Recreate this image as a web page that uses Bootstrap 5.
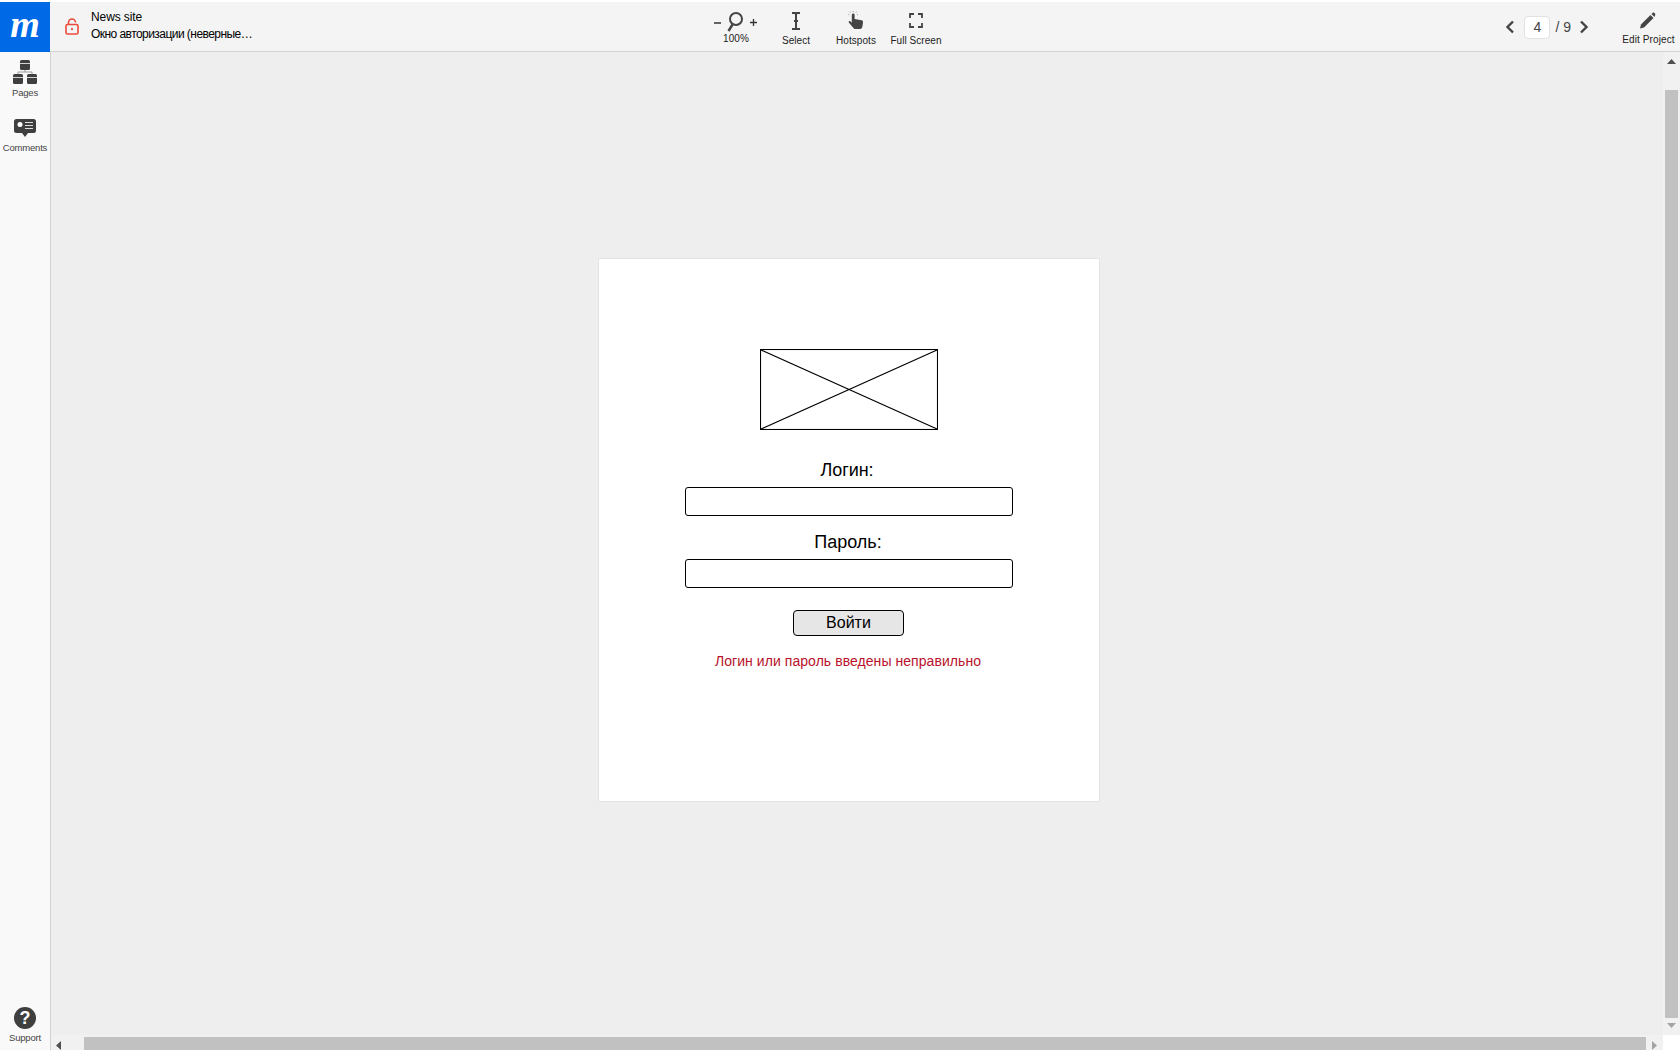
<!DOCTYPE html>
<html lang="en">

<head>
    <meta charset="UTF-8">
    <meta name="viewport" content="width=device-width, initial-scale=1.0">
    <title>News site</title>
    <link href="https://cdn.jsdelivr.net/npm/bootstrap@5.3.0/dist/css/bootstrap.min.css" rel="stylesheet">
    <style>
        html, body { height: 100%; overflow: hidden; }
        body { font-family: "Liberation Sans", Arial, sans-serif; background: #fff; color: #000; padding-top: 2px; }
        .app { height: 1048px; }
        .topbar { height: 50px; background: #f4f4f4; border-bottom: 1px solid #d2d2d2; flex: none; }
        .logo-box { width: 50px; height: 50px; background: #0069e6; color: #fff; font: italic bold 38px/44px "Liberation Serif", serif; text-align: center; flex: none; }
        .left-group { width: 706px; flex: none; }
        .lock-ico { margin-left: 15px; margin-right: 12px; }
        .proj-text { font-size: 12px; line-height: 17px; letter-spacing: -0.1px; padding-bottom: 1px; }
        .proj-sub { letter-spacing: -0.55px; }
        .tool { width: 60px; height: 49px; font-size: 10px; color: #222; padding-top: 9px; }
        .tool svg { display: block; height: 20px; }
        .tool-label { line-height: 12px; margin-top: 4px; white-space: nowrap; letter-spacing: 0.05px; }
        .tool-zoom { padding-top: 10px; }
        .tool-zoom svg { margin-left: -3px; }
        .tool-zoom .tool-label { margin-top: 1px; }
        .pager { font-size: 14px; color: #444; margin-right: 26px; padding-top: 1px; }
        .page-input { width: 26px; height: 23px; background: #fff; border: 1px solid #e2e2e2; border-radius: 4px; text-align: center; font-size: 14px; line-height: 21px; margin: 0 5px 0 9px; }
        .page-total { margin-right: 8px; }
        .tool-edit { width: 65px; padding-top: 9px; }
        .tool-edit svg { margin-right: 2px; }
        .tool-edit .tool-label { margin-top: 3px; margin-left: 2px; letter-spacing: 0.1px; }
        .side { width: 51px; background: #f9f9f9; border-right: 1px solid #d2d2d2; flex: none; font-size: 9.5px; color: #444; }
        .side-item { line-height: 12px; letter-spacing: -0.2px; white-space: nowrap; }
        .side-pages { padding-top: 8px; }
        .side-comments { padding-top: 20px; }
        .side-comments svg { margin-bottom: 5px; }
        .side-pages svg { margin-bottom: 3px; }
        .help-dot { width: 22px; height: 22px; border-radius: 50%; background: #3f3f3f; color: #fff; font-size: 18px; font-weight: bold; line-height: 22px; text-align: center; margin-bottom: 3px; }
        .side-support { padding-bottom: 6px; }
        .canvas { background: #eee; min-height: 0; overflow: hidden; }
        .screen-card { width: 502px; height: 544px; margin: 206px 0 0 547px; border: 1px solid #e3e3e3; border-radius: 2px; padding-top: 90px; background: #fff; flex: none; }
        .img-ph { display: block; width: 178px; height: 81px; }
        .fld-label { font-size: 18px; line-height: 21px; margin: 0; }
        .fld-login { margin-top: 30px; margin-bottom: 6px; margin-right: 4px; letter-spacing: -0.1px; }
        .fld-pass { margin-top: 16px; margin-bottom: 6px; margin-right: 2px; }
        .fld-input { width: 328px; height: 29px; border: 1px solid #000; border-radius: 3px; padding: 0 4px; background: #fff; }
        .enter-btn { width: 111px; height: 26px; margin: 22px 1px 0 0; padding: 0; border: 1px solid #000; border-radius: 4px; background: #e6e6e6; color: #000; font-size: 16px; line-height: 22px; }
        .err-msg { color: #b8122a; font-size: 14px; line-height: 16px; margin-top: 17px; margin-right: 2px; letter-spacing: 0.06px; }
        .vscroll { width: 17px; background: #f1f1f1; flex: none; }
        .vthumb { width: 13px; height: 928px; background: #c1c1c1; margin: 0 auto; }
        .arr-up { height: 38px; padding-top: 7px; }
        .arr-down { padding-top: 5px; }
        .hscroll { height: 15px; flex: none; }
        .htrack { background: #f1f1f1; padding-top: 2px; }
        .hthumb { width: 1562px; height: 13px; background: #c1c1c1; margin: 0 17px 0 33px; }
        .corner { width: 17px; background: #fff; flex: none; }
        .h-arr { width: 33px; padding: 4px 0 0 5px; flex: none; margin-right: -33px; }
        .h-arr-r { margin: 0; padding: 4px 0 0 6px; width: 17px; margin-left: -17px; }
    </style>
</head>

<body>
    <div class="app d-flex flex-column">
        <div class="topbar d-flex">
            <div class="left-group d-flex align-items-center">
                <div class="logo-box">m</div>
                <svg class="lock-ico" width="14" height="17" viewBox="0 0 14 17" fill="none" stroke="#ea4a3a" stroke-width="1.6">
                    <path d="M3.500 7V4.500a3.500 3.500 0 0 1 7 0"/>
                    <rect x="1" y="6.500" width="12" height="9.500" rx="1.500"/>
                    <circle cx="7" cy="11.200" r="1.100" fill="#ea4a3a" stroke="none"/>
                </svg>
                <div class="proj-text">
                    <div>News site</div>
                    <div class="proj-sub">Окно авторизации (неверные…</div>
                </div>
            </div>

            <div class="tool tool-zoom d-flex flex-column align-items-center">
                <svg width="44" height="20" viewBox="0 0 44 20">
                    <path d="M1 11h7M37 10.500h7M40.500 7v7" stroke="#333" stroke-width="1.300" fill="none"/>
                    <circle cx="23" cy="7" r="6" stroke="#444" stroke-width="2" fill="none"/>
                    <path d="M19.500 12.500 15.500 19" stroke="#444" stroke-width="2.400" fill="none"/>
                </svg>
                <div class="tool-label">100%</div>
            </div>
            <div class="tool d-flex flex-column align-items-center">
                <svg width="12" height="20" viewBox="0 0 12 20">
                    <path d="M2 2h3l1 1 1-1h3M2 18h3l1-1 1 1h3M6 3v14M4 10h4" stroke="#444" stroke-width="2" fill="none"/>
                </svg>
                <div class="tool-label">Select</div>
            </div>
            <div class="tool d-flex flex-column align-items-center">
                <svg width="16" height="20" viewBox="0 0 16 20">
                    <path d="M3.800 4a1.400 1.400 0 0 1 2.800 0v4l7 1.300c1.200.3 1.500 1.200 1.400 2.200l-.6 4c-.2 1.500-1 2.500-2.500 2.500H7.500c-1 0-1.700-.5-2.300-1.300L.8 11.500c-.6-1 .6-2 1.500-1.200l1.500 1.500z" fill="#444"/>
                    <path d="M1.200 3.800.4 3.400M2.300 1.500 1.800.7M5.200.9V0M8 1.500l.5-.8M9.200 3.800l.8-.4" stroke="#8a8a8a" stroke-width="1" fill="none"/>
                </svg>
                <div class="tool-label">Hotspots</div>
            </div>
            <div class="tool d-flex flex-column align-items-center">
                <svg width="14" height="20" viewBox="0 0 14 20">
                    <path d="M1 7V3h4M9 3h4v4M13 12v4H9M5 16H1v-4" stroke="#444" stroke-width="1.800" fill="none"/>
                </svg>
                <div class="tool-label">Full Screen</div>
            </div>

            <div class="pager d-flex align-items-center ms-auto">
                <svg width="10" height="14" viewBox="0 0 10 14"><path d="M8 1.500 2.500 7 8 12.500" stroke="#444" stroke-width="2.400" fill="none"/></svg>
                <div class="page-input">4</div>
                <div class="page-total">/ 9</div>
                <svg width="10" height="14" viewBox="0 0 10 14"><path d="M2 1.500 7.500 7 2 12.500" stroke="#444" stroke-width="2.400" fill="none"/></svg>
            </div>
            <div class="tool tool-edit d-flex flex-column align-items-center">
                <svg width="18" height="20" viewBox="0 0 18 20">
                    <path d="M3 13.500 12.500 4l3 3L6 16.500l-4 1z" fill="#444"/>
                    <path d="M13.500 3l1.200-1.200c.4-.4 1-.4 1.400 0l1 1c.4.400.4 1 0 1.400L16.500 6z" fill="#444"/>
                </svg>
                <div class="tool-label">Edit Project</div>
            </div>
        </div>

        <div class="d-flex flex-grow-1" style="min-height:0">
            <div class="side d-flex flex-column align-items-center">
                <div class="side-item side-pages d-flex flex-column align-items-center">
                    <svg width="24" height="24" viewBox="0 0 24 24">
                        <rect x="7" y="0" width="10" height="10" rx="1.500" fill="#3f3f3f"/>
                        <rect x="0" y="14" width="10" height="10" rx="1.500" fill="#3f3f3f"/>
                        <rect x="14" y="14" width="10" height="10" rx="1.500" fill="#3f3f3f"/>
                        <path d="M7 3.500h10M0 17.500h10M14 17.500h10" stroke="#f9f9f9" stroke-width=".8"/>
                        <path d="M12 10v2M5 14v-2h14v2" stroke="#999" stroke-width="1" fill="none"/>
                    </svg>
                    Pages
                </div>
                <div class="side-item side-comments d-flex flex-column align-items-center">
                    <svg width="22" height="18" viewBox="0 0 22 18">
                        <path d="M2.500 0h17A2.500 2.500 0 0 1 22 2.500v9a2.500 2.500 0 0 1-2.500 2.500H14l-3 4-3-4H2.500A2.500 2.500 0 0 1 0 11.500v-9A2.500 2.500 0 0 1 2.500 0z" fill="#3f3f3f"/>
                        <circle cx="6" cy="5.500" r="2.500" fill="#fff"/>
                        <path d="M11 3.500h8M11 6.500h8M11 9.500h8" stroke="#ddd" stroke-width="1.100"/>
                    </svg>
                    Comments
                </div>
                <div class="side-item side-support d-flex flex-column align-items-center mt-auto">
                    <div class="help-dot">?</div>
                    Support
                </div>
            </div>

            <div class="d-flex flex-column flex-grow-1" style="min-width:0">
                <div class="d-flex flex-grow-1" style="min-height:0">
                    <div class="canvas flex-grow-1 d-flex align-items-start">
                        <div class="screen-card d-flex flex-column align-items-center">
                            <svg class="img-ph" viewBox="0 0 178 81" preserveAspectRatio="none">
                                <rect x=".5" y=".5" width="177" height="80" fill="#fff" stroke="#000" stroke-width="1.100"/>
                                <path d="M1 1 177 80M177 1 1 80" stroke="#000" stroke-width="1.200"/>
                            </svg>
                            <label class="fld-label fld-login" for="login">Логин:</label>
                            <input class="fld-input" id="login" type="text">
                            <label class="fld-label fld-pass" for="pass">Пароль:</label>
                            <input class="fld-input" id="pass" type="text">
                            <button class="btn enter-btn" type="button">Войти</button>
                            <div class="err-msg">Логин или пароль введены неправильно</div>
                        </div>
                    </div>
                    <div class="vscroll d-flex flex-column">
                        <div class="arr-up d-flex justify-content-center">
                            <svg width="9" height="5" viewBox="0 0 9 5"><path d="M4.500 0 9 5H0z" fill="#505050"/></svg>
                        </div>
                        <div class="vthumb"></div>
                        <div class="arr-down d-flex justify-content-center">
                            <svg width="9" height="5" viewBox="0 0 9 5"><path d="M0 0h9L4.500 5z" fill="#a3a3a3"/></svg>
                        </div>
                    </div>
                </div>
                <div class="hscroll d-flex">
                    <div class="htrack flex-grow-1 d-flex">
                        <div class="h-arr"><svg class="d-block" width="5" height="9" viewBox="0 0 5 9"><path d="M5 0v9L0 4.500z" fill="#505050"/></svg></div>
                        <div class="hthumb"></div>
                        <div class="h-arr h-arr-r"><svg class="d-block" width="5" height="9" viewBox="0 0 5 9"><path d="M0 0v9l5-4.500z" fill="#a3a3a3"/></svg></div>
                    </div>
                    <div class="corner"></div>
                </div>
            </div>
        </div>
    </div>

    <script src="https://cdn.jsdelivr.net/npm/bootstrap@5.3.0/dist/js/bootstrap.bundle.min.js"></script>
</body>

</html>
